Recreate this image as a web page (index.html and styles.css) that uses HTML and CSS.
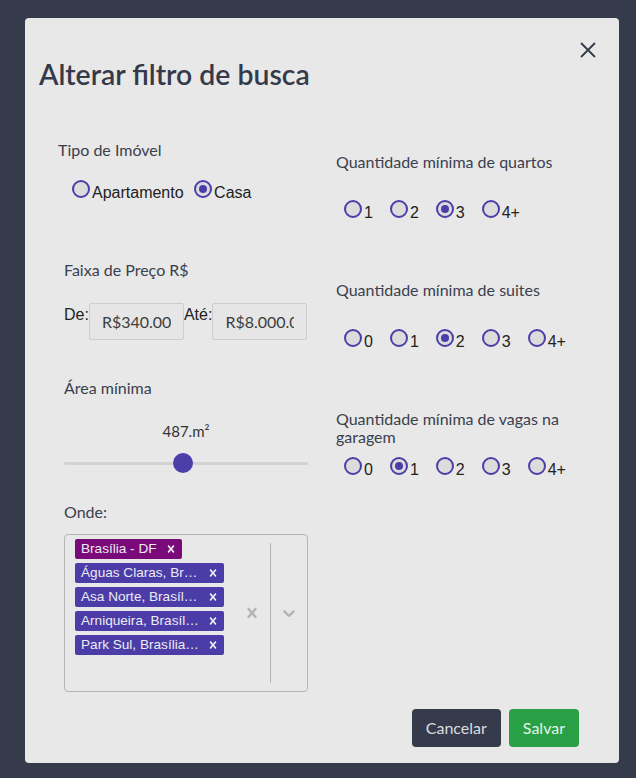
FILE: index.html
```html
<!DOCTYPE html>
<html lang="pt-BR">
<head>
<meta charset="utf-8">
<title>Alterar filtro de busca</title>
<link rel="stylesheet" href="styles.css">
</head>
<body>
<div class="modal">
  <div class="modal-header">
    <h1 class="title">Alterar filtro de busca</h1>
    <button class="close" aria-label="Fechar">
      <svg width="16" height="16" viewBox="0 0 16 16"><path d="M1 1L15 15M15 1L1 15" stroke="#343a4a" stroke-width="1.8" fill="none"/></svg>
    </button>
  </div>
  <div class="modal-body">
    <div class="col col-left">
      <div class="tipo">
        <div class="label">Tipo de Imóvel</div>
        <div class="radios radios-tipo">
          <span class="opt"><span class="dot"></span><span class="opt-text">Apartamento</span></span>
          <span class="opt"><span class="dot checked"></span><span class="opt-text">Casa</span></span>
        </div>
      </div>
      <div class="section price">
        <div class="label">Faixa de Preço R$</div>
        <div class="price-row">
          <span class="price-label">De:</span>
          <input class="input" type="text" value="R$340.00" readonly>
          <span class="price-label">Até:</span>
          <input class="input" type="text" value="R$8.000.00" readonly>
        </div>
      </div>
      <div class="section area">
        <div class="label">Área mínima</div>
        <div class="area-value">487.m²</div>
        <div class="slider">
          <div class="track"></div>
          <div class="thumb" style="left:109px"></div>
        </div>
      </div>
      <div class="section onde">
        <div class="label">Onde:</div>
        <div class="select">
          <div class="values">
            <div class="tag tag-main"><span class="tag-label">Brasília - DF</span><span class="tag-remove"><svg width="14" height="14" viewBox="0 0 20 20"><path d="M14.348 14.849c-0.469 0.469-1.229 0.469-1.697 0l-2.651-3.030-2.651 3.029c-0.469 0.469-1.229 0.469-1.697 0-0.469-0.469-0.469-1.229 0-1.697l2.758-3.15-2.759-3.152c-0.469-0.469-0.469-1.228 0-1.697s1.228-0.469 1.697 0l2.652 3.031 2.651-3.031c0.469-0.469 1.228-0.469 1.697 0s0.469 1.229 0 1.697l-2.758 3.152 2.758 3.15c0.469 0.469 0.469 1.229 0 1.698z"/></svg></span></div>
            <div class="tag"><span class="tag-label">Águas Claras, Brasília - DF</span><span class="tag-remove"><svg width="14" height="14" viewBox="0 0 20 20"><path d="M14.348 14.849c-0.469 0.469-1.229 0.469-1.697 0l-2.651-3.030-2.651 3.029c-0.469 0.469-1.229 0.469-1.697 0-0.469-0.469-0.469-1.229 0-1.697l2.758-3.15-2.759-3.152c-0.469-0.469-0.469-1.228 0-1.697s1.228-0.469 1.697 0l2.652 3.031 2.651-3.031c0.469-0.469 1.228-0.469 1.697 0s0.469 1.229 0 1.697l-2.758 3.152 2.758 3.15c0.469 0.469 0.469 1.229 0 1.698z"/></svg></span></div>
            <div class="tag"><span class="tag-label">Asa Norte, Brasília - DF</span><span class="tag-remove"><svg width="14" height="14" viewBox="0 0 20 20"><path d="M14.348 14.849c-0.469 0.469-1.229 0.469-1.697 0l-2.651-3.030-2.651 3.029c-0.469 0.469-1.229 0.469-1.697 0-0.469-0.469-0.469-1.229 0-1.697l2.758-3.15-2.759-3.152c-0.469-0.469-0.469-1.228 0-1.697s1.228-0.469 1.697 0l2.652 3.031 2.651-3.031c0.469-0.469 1.228-0.469 1.697 0s0.469 1.229 0 1.697l-2.758 3.152 2.758 3.15c0.469 0.469 0.469 1.229 0 1.698z"/></svg></span></div>
            <div class="tag"><span class="tag-label">Arniqueira, Brasília - DF</span><span class="tag-remove"><svg width="14" height="14" viewBox="0 0 20 20"><path d="M14.348 14.849c-0.469 0.469-1.229 0.469-1.697 0l-2.651-3.030-2.651 3.029c-0.469 0.469-1.229 0.469-1.697 0-0.469-0.469-0.469-1.229 0-1.697l2.758-3.15-2.759-3.152c-0.469-0.469-0.469-1.228 0-1.697s1.228-0.469 1.697 0l2.652 3.031 2.651-3.031c0.469-0.469 1.228-0.469 1.697 0s0.469 1.229 0 1.697l-2.758 3.152 2.758 3.15c0.469 0.469 0.469 1.229 0 1.698z"/></svg></span></div>
            <div class="tag"><span class="tag-label">Park Sul, Brasília - DF</span><span class="tag-remove"><svg width="14" height="14" viewBox="0 0 20 20"><path d="M14.348 14.849c-0.469 0.469-1.229 0.469-1.697 0l-2.651-3.030-2.651 3.029c-0.469 0.469-1.229 0.469-1.697 0-0.469-0.469-0.469-1.229 0-1.697l2.758-3.15-2.759-3.152c-0.469-0.469-0.469-1.228 0-1.697s1.228-0.469 1.697 0l2.652 3.031 2.651-3.031c0.469-0.469 1.228-0.469 1.697 0s0.469 1.229 0 1.697l-2.758 3.152 2.758 3.15c0.469 0.469 0.469 1.229 0 1.698z"/></svg></span></div>
          </div>
          <div class="indicators">
            <span class="ind"><svg width="20" height="20" viewBox="0 0 20 20"><path d="M14.348 14.849c-0.469 0.469-1.229 0.469-1.697 0l-2.651-3.030-2.651 3.029c-0.469 0.469-1.229 0.469-1.697 0-0.469-0.469-0.469-1.229 0-1.697l2.758-3.15-2.759-3.152c-0.469-0.469-0.469-1.228 0-1.697s1.228-0.469 1.697 0l2.652 3.031 2.651-3.031c0.469-0.469 1.228-0.469 1.697 0s0.469 1.229 0 1.697l-2.758 3.152 2.758 3.15c0.469 0.469 0.469 1.229 0 1.698z"/></svg></span>
            <span class="sep"></span>
            <span class="ind"><svg width="20" height="20" viewBox="0 0 20 20"><path d="M4.516 7.548c0.436-0.446 1.043-0.481 1.576 0l3.908 3.747 3.908-3.747c0.533-0.481 1.141-0.446 1.574 0 0.436 0.445 0.408 1.197 0 1.615-0.406 0.418-4.695 4.502-4.695 4.502-0.217 0.223-0.502 0.335-0.787 0.335s-0.57-0.112-0.789-0.335c0 0-4.287-4.084-4.695-4.502s-0.436-1.17 0-1.615z"/></svg></span>
          </div>
        </div>
      </div>
    </div>
    <div class="col col-right">
      <div class="group">
        <div class="label group-label">Quantidade mínima de quartos</div>
        <div class="radios radios-num">
          <span class="opt"><span class="dot"></span><span class="opt-text">1</span></span>
          <span class="opt"><span class="dot"></span><span class="opt-text">2</span></span>
          <span class="opt"><span class="dot checked"></span><span class="opt-text">3</span></span>
          <span class="opt"><span class="dot"></span><span class="opt-text">4+</span></span>
        </div>
      </div>
      <div class="group">
        <div class="label group-label">Quantidade mínima de suites</div>
        <div class="radios radios-num">
          <span class="opt"><span class="dot"></span><span class="opt-text">0</span></span>
          <span class="opt"><span class="dot"></span><span class="opt-text">1</span></span>
          <span class="opt"><span class="dot checked"></span><span class="opt-text">2</span></span>
          <span class="opt"><span class="dot"></span><span class="opt-text">3</span></span>
          <span class="opt"><span class="dot"></span><span class="opt-text">4+</span></span>
        </div>
      </div>
      <div class="group">
        <div class="label group-label">Quantidade mínima de vagas na garagem</div>
        <div class="radios radios-num">
          <span class="opt"><span class="dot"></span><span class="opt-text">0</span></span>
          <span class="opt"><span class="dot checked"></span><span class="opt-text">1</span></span>
          <span class="opt"><span class="dot"></span><span class="opt-text">2</span></span>
          <span class="opt"><span class="dot"></span><span class="opt-text">3</span></span>
          <span class="opt"><span class="dot"></span><span class="opt-text">4+</span></span>
        </div>
      </div>
    </div>
  </div>
  <div class="modal-footer">
    <button class="btn btn-dark">Cancelar</button>
    <button class="btn btn-success">Salvar</button>
  </div>
</div>
</body>
</html>
```
FILE: styles.css
```css
html, body {
  margin: 0;
  padding: 0;
}
body {
  background: #353b4b;
  font-family: Lato, "Open Sans", sans-serif;
  height: 778px;
  overflow: hidden;
}
.modal {
  box-sizing: border-box;
  width: 594px;
  height: 745px;
  margin: 18px 0 0 25px;
  background: #e8e8e8;
  border-radius: 4px;
  display: flex;
  flex-direction: column;
}
.modal-header {
  display: flex;
  justify-content: space-between;
  align-items: flex-start;
  padding: 24px 23px 0 14px;
}
.title {
  margin: 16px 0 0;
  font-size: 28.4px;
  line-height: 33.6px;
  font-weight: 600;
  color: #343a4a;
}
.close {
  width: 16px;
  height: 16px;
  padding: 0;
  border: 0;
  background: none;
  display: block;
}
.close svg {
  display: block;
}
.modal-body {
  display: grid;
  grid-template-columns: 250px 250px;
  column-gap: 28px;
  padding: 49.6px 33px 0;
}
.col-right {
  padding-top: 11.5px;
}
.label {
  font-size: 16px;
  line-height: 18px;
  color: #3b404e;
}
.section {
  padding-left: 6px;
}
.radios {
  display: flex;
  align-items: flex-end;
}
.opt {
  display: inline-flex;
  align-items: flex-end;
}
.dot {
  box-sizing: border-box;
  width: 18px;
  height: 18px;
  border: 2px solid #4b3ea8;
  border-radius: 50%;
  background: #dcdcdc;
  margin-bottom: 4px;
  display: flex;
  align-items: center;
  justify-content: center;
}
.dot.checked::after {
  content: "";
  width: 8px;
  height: 8px;
  border-radius: 50%;
  background: #4b3ea8;
}
.opt-text {
  font-family: "Liberation Sans", Arial, sans-serif;
  font-size: 16px;
  line-height: 18px;
  color: #222;
  margin-left: 2px;
}
.radios-tipo {
  margin-top: 21px;
  padding-left: 14px;
}
.radios-tipo .opt {
  margin-right: 10.5px;
}
.radios-num {
  padding-left: 8px;
}
.radios-num .opt {
  margin-right: 17px;
}
.price {
  margin-top: 59px;
}
.price-row {
  margin-top: 24px;
  display: flex;
  align-items: flex-start;
}
.price-label {
  font-family: "Liberation Sans", Arial, sans-serif;
  font-size: 16px;
  line-height: 24px;
  color: #222;
}
.input {
  box-sizing: border-box;
  width: 95px;
  height: 37px;
  margin: 0;
  border: 1px solid #cdcdcd;
  border-radius: 2px;
  background: #e6e6e6;
  padding: 0 12px;
  font-family: Lato, sans-serif;
  font-size: 16px;
  color: #3d3d3d;
  outline: none;
}
.area {
  margin-top: 39px;
}
.area-value {
  margin-top: 24.7px;
  text-align: center;
  font-size: 15px;
  line-height: 18px;
  color: #333;
}
.slider {
  margin-top: 13.5px;
  height: 20px;
  position: relative;
  display: flex;
  align-items: center;
}
.track {
  flex: 1;
  height: 3px;
  border-radius: 2px;
  background: #d2d2d2;
}
.thumb {
  position: absolute;
  top: 0;
  width: 20px;
  height: 20px;
  border-radius: 50%;
  background: #4b3ea8;
}
.onde {
  margin-top: 29.5px;
}
.select {
  box-sizing: border-box;
  margin-top: 13.5px;
  height: 158px;
  border: 1px solid #b5b5b5;
  border-radius: 4px;
  display: flex;
}
.values {
  flex: 1;
  min-width: 0;
  padding: 2px 8px;
  display: flex;
  flex-wrap: wrap;
  align-content: flex-start;
}
.tag {
  display: flex;
  min-width: 0;
  max-width: calc(100% - 4px);
  margin: 2px;
  border-radius: 2px;
  background: #4b3ca7;
}
.tag-main {
  background: #7a0a7a;
}
.tag-label {
  font-family: "Liberation Sans", Arial, sans-serif;
  font-size: 13.6px;
  line-height: 14px;
  padding: 3px 3px 3px 6px;
  color: #ececf2;
  white-space: nowrap;
  overflow: hidden;
  text-overflow: ellipsis;
}
.tag-remove {
  display: flex;
  align-items: center;
  padding: 0 4px;
  fill: #ececf2;
}
.indicators {
  display: flex;
  align-items: center;
}
.ind {
  display: flex;
  padding: 8px;
  fill: #b3b3b3;
}
.sep {
  align-self: stretch;
  width: 1px;
  margin: 8px 0;
  background: #b3b3b3;
}
.group-label {
  height: 47.5px;
  line-height: 18.5px;
}
.group + .group {
  margin-top: 59px;
}
.modal-footer {
  margin-top: auto;
  display: flex;
  justify-content: flex-end;
  gap: 8px;
  padding: 0 40px 16px;
}
.btn {
  font-family: Lato, sans-serif;
  font-size: 16px;
  line-height: 24px;
  padding: 6px 13px;
  border: 1px solid transparent;
  border-radius: 4px;
}
.btn-dark {
  background: #353b4b;
  color: #dcdde0;
}
.btn-success {
  background: #29a045;
  color: #e6f3e8;
}
```
